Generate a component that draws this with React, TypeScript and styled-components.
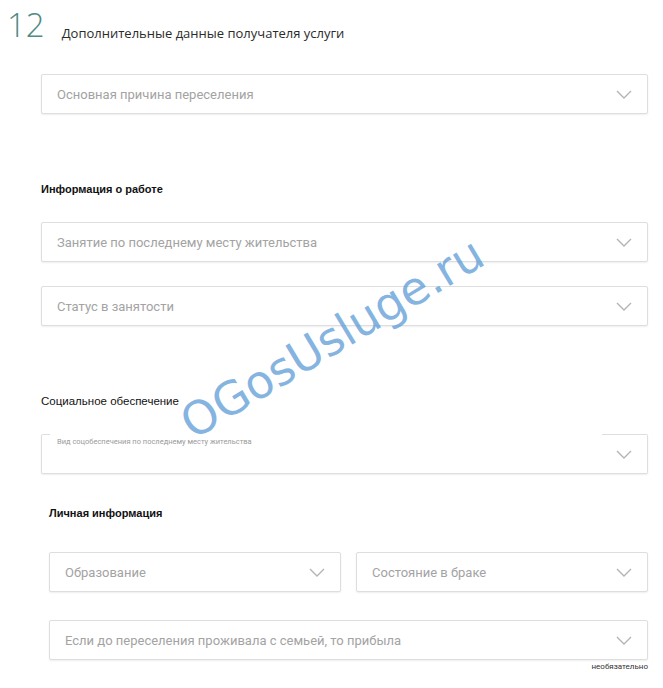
import styled, { createGlobalStyle } from "styled-components";

const GlobalStyle = createGlobalStyle`
  body {
    margin: 0;
    background: #fff;
    font-family: Roboto, "Liberation Sans", Arial, sans-serif;
  }
`;

function Chevron() {
  return (
    <svg width="16" height="9" viewBox="0 0 16 9" fill="none">
      <path d="M1 1l7 7 7-7" stroke="#b4b4b4" strokeWidth="1.4" />
    </svg>
  );
}

type SelectProps = { placeholder?: string; label?: string; cut?: boolean };

function Select({ placeholder, label, cut }: SelectProps) {
  return (
    <Field $cut={cut}>
      {label && <SmallLabel>{label}</SmallLabel>}
      <Placeholder>{placeholder}</Placeholder>
      <Chevron />
    </Field>
  );
}

function App() {
  return (
    <Page>
      <GlobalStyle />
      <Header>
        <StepNumber>12</StepNumber>
        <Title>Дополнительные данные получателя услуги</Title>
      </Header>

      <Section $left={41} $top={22}>
        <Select placeholder="Основная причина переселения" />
      </Section>

      <Section $left={41} $top={68}>
        <SectionTitle>Информация о работе</SectionTitle>
        <Stack $gap={24} $top={26}>
          <Select placeholder="Занятие по последнему месту жительства" />
          <Select placeholder="Статус в занятости" />
        </Stack>
      </Section>

      <Section $left={41} $top={68}>
        <SectionTitle $weight={400} $size={11.5}>
          Социальное обеспечение
        </SectionTitle>
        <Stack $gap={0} $top={26}>
          <Select cut label="Вид соцобеспечения по последнему месту жительства" />
        </Stack>
      </Section>

      <Section $left={49} $top={32}>
        <SectionTitle>Личная информация</SectionTitle>
        <Stack $gap={28} $top={32}>
          <Row>
            <Select placeholder="Образование" />
            <Select placeholder="Состояние в браке" />
          </Row>
          <Select placeholder="Если до переселения проживала с семьей, то прибыла" />
        </Stack>
        <Optional>необязательно</Optional>
      </Section>

      <Watermark>OGosUsluge.ru</Watermark>
    </Page>
  );
}

const Page = styled.div`
  position: relative;
  width: 663px;
  height: 688px;
  overflow: hidden;
  padding-right: 15px;
  box-sizing: border-box;
`;

const Header = styled.div`
  display: flex;
  align-items: flex-start;
  height: 52px;
  padding-left: 7px;
`;

const StepNumber = styled.div`
  font-family: "Open Sans", "Liberation Sans", sans-serif;
  font-weight: 300;
  font-size: 33px;
  color: #4f8a84;
  line-height: 1;
  padding-top: 8px;
`;

const Title = styled.div`
  font-family: "Open Sans", "Liberation Sans", sans-serif;
  font-size: 13px;
  line-height: 18px;
  color: #2b2b2b;
  margin-left: 17px;
  margin-top: 24px;
`;

const Section = styled.div<{ $left: number; $top: number }>`
  display: flex;
  flex-direction: column;
  padding-left: ${(p) => p.$left}px;
  margin-top: ${(p) => p.$top}px;
`;

const SectionTitle = styled.div<{ $weight?: number; $size?: number }>`
  font-family: "Liberation Sans", Arial, sans-serif;
  font-weight: ${(p) => p.$weight ?? 700};
  font-size: ${(p) => p.$size ?? 11}px;
  color: #111;
  line-height: 14px;
`;

const Stack = styled.div<{ $gap: number; $top: number }>`
  display: flex;
  flex-direction: column;
  gap: ${(p) => p.$gap}px;
  margin-top: ${(p) => p.$top}px;
`;

const Row = styled.div`
  display: grid;
  grid-template-columns: 1fr 1fr;
  gap: 15px;
`;

const Field = styled.div<{ $cut?: boolean }>`
  position: relative;
  display: flex;
  align-items: center;
  justify-content: space-between;
  height: 40px;
  box-sizing: border-box;
  padding: 0 15px;
  border: 1px solid #dedede;
  border-radius: 2px;
  box-shadow: 0 1px 2px rgba(0, 0, 0, 0.07);
  background: #fff;
  ${(p) =>
    p.$cut &&
    `
    border-top-color: transparent;
    background-image: linear-gradient(to right, #dedede 0 9px, transparent 9px calc(100% - 46px), #dedede calc(100% - 46px));
    background-size: 100% 1px;
    background-position: 0 0;
    background-repeat: no-repeat;
    background-origin: border-box;
    background-clip: border-box;
  `}
`;

const Placeholder = styled.span`
  font-size: 13px;
  color: #a3a3a3;
`;

const SmallLabel = styled.span`
  position: absolute;
  left: 15px;
  top: 2px;
  font-size: 7.5px;
  color: #9a9a9a;
`;

const Optional = styled.div`
  align-self: flex-end;
  font-size: 8px;
  color: #333;
  margin-top: 2px;
`;

const Watermark = styled.div`
  position: absolute;
  left: 332px;
  top: 338px;
  transform: translate(-50%, -50%) rotate(-31deg);
  font-family: "DejaVu Sans", sans-serif;
  font-size: 46px;
  color: rgba(91, 155, 213, 0.75);
  white-space: nowrap;
  pointer-events: none;
`;

export default App;
